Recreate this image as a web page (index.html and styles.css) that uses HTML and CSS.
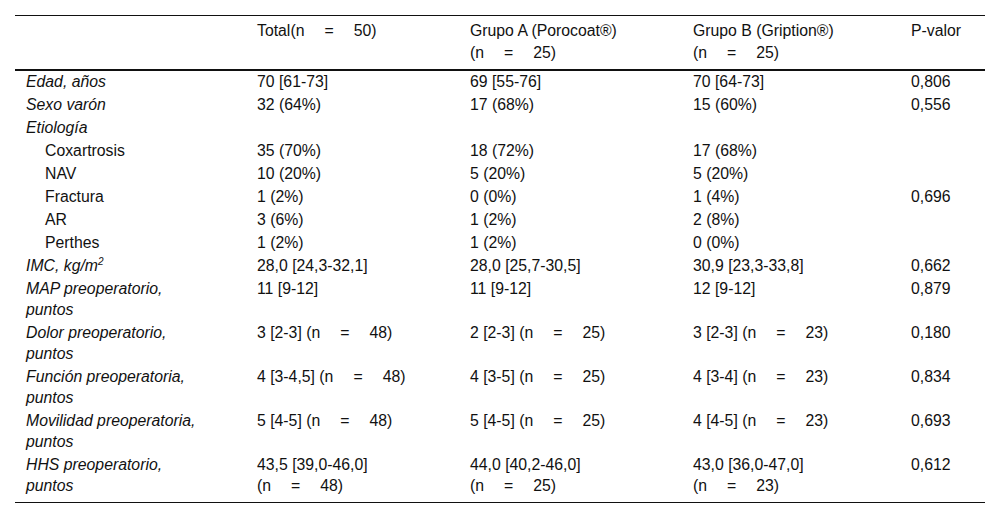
FILE: index.html
```html
<!DOCTYPE html>
<html lang="es">
<head>
<meta charset="utf-8">
<title>Tabla</title>
<link rel="stylesheet" href="styles.css">
</head>
<body>
<div class="page">
<table class="data">
  <colgroup>
    <col class="c1"><col class="c2"><col class="c3"><col class="c4"><col class="c5">
  </colgroup>
  <thead>
    <tr>
      <th></th>
      <th>Total<span class="n">(n<span class="eq">=</span>50)</span></th>
      <th>Grupo A (Porocoat®) <span class="n">(n<span class="eq">=</span>25)</span></th>
      <th>Grupo B (Gription®) <span class="n">(n<span class="eq">=</span>25)</span></th>
      <th>P-valor</th>
    </tr>
  </thead>
  <tbody>
    <tr><td class="lbl">Edad, años</td><td>70 [61-73]</td><td>69 [55-76]</td><td>70 [64-73]</td><td>0,806</td></tr>
    <tr><td class="lbl">Sexo varón</td><td>32 (64%)</td><td>17 (68%)</td><td>15 (60%)</td><td>0,556</td></tr>
    <tr><td class="lbl">Etiología</td><td></td><td></td><td></td><td></td></tr>
    <tr><td class="sub">Coxartrosis</td><td>35 (70%)</td><td>18 (72%)</td><td>17 (68%)</td><td></td></tr>
    <tr><td class="sub">NAV</td><td>10 (20%)</td><td>5 (20%)</td><td>5 (20%)</td><td></td></tr>
    <tr><td class="sub">Fractura</td><td>1 (2%)</td><td>0 (0%)</td><td>1 (4%)</td><td>0,696</td></tr>
    <tr><td class="sub">AR</td><td>3 (6%)</td><td>1 (2%)</td><td>2 (8%)</td><td></td></tr>
    <tr><td class="sub">Perthes</td><td>1 (2%)</td><td>1 (2%)</td><td>0 (0%)</td><td></td></tr>
    <tr><td class="lbl">IMC, kg/m<sup>2</sup></td><td>28,0 [24,3-32,1]</td><td>28,0 [25,7-30,5]</td><td>30,9 [23,3-33,8]</td><td>0,662</td></tr>
    <tr><td class="lbl">MAP preoperatorio, puntos</td><td>11 [9-12]</td><td>11 [9-12]</td><td>12 [9-12]</td><td>0,879</td></tr>
    <tr><td class="lbl">Dolor preoperatorio, puntos</td><td>3 [2-3] <span class="n">(n<span class="eq">=</span>48)</span></td><td>2 [2-3] <span class="n">(n<span class="eq">=</span>25)</span></td><td>3 [2-3] <span class="n">(n<span class="eq">=</span>23)</span></td><td>0,180</td></tr>
    <tr><td class="lbl">Función preoperatoria, puntos</td><td>4 [3-4,5] <span class="n">(n<span class="eq">=</span>48)</span></td><td>4 [3-5] <span class="n">(n<span class="eq">=</span>25)</span></td><td>4 [3-4] <span class="n">(n<span class="eq">=</span>23)</span></td><td>0,834</td></tr>
    <tr><td class="lbl">Movilidad preoperatoria, puntos</td><td>5 [4-5] <span class="n">(n<span class="eq">=</span>48)</span></td><td>5 [4-5] <span class="n">(n<span class="eq">=</span>25)</span></td><td>4 [4-5] <span class="n">(n<span class="eq">=</span>23)</span></td><td>0,693</td></tr>
    <tr class="last"><td class="lbl">HHS preoperatorio, puntos</td><td>43,5 [39,0-46,0] <span class="n">(n<span class="eq">=</span>48)</span></td><td>44,0 [40,2-46,0] <span class="n">(n<span class="eq">=</span>25)</span></td><td>43,0 [36,0-47,0] <span class="n">(n<span class="eq">=</span>23)</span></td><td>0,612</td></tr>
  </tbody>
</table>
</div>
</body>
</html>
```

FILE: styles.css
```css
html, body {
  margin: 0;
  padding: 0;
  background: #fff;
}
.page {
  padding: 15px 15px 0 15px;
}
.data {
  width: 970px;
  border-collapse: collapse;
  table-layout: fixed;
  font-family: "Liberation Sans", Arial, sans-serif;
  font-size: 15.8px;
  line-height: 21px;
  color: #111;
  border-top: 1px solid #111;
  border-bottom: 1px solid #111;
}
.c1 { width: 232px; }
.c2 { width: 213px; }
.c3 { width: 223px; }
.c4 { width: 218px; }
.c5 { width: 84px; }
.data th {
  font-weight: normal;
  text-align: left;
  vertical-align: top;
  padding: 4px 20px 5px 10px;
  line-height: 22px;
  border-bottom: 2px solid #111;
}
.data td {
  vertical-align: top;
  padding: 0 20px 2px 10px;
}
.data td.lbl,
.data td.sub {
  padding-right: 40px;
  padding-left: 11px;
}
.data td.lbl {
  font-style: italic;
}
.data td.sub {
  padding-left: 30px;
}
.data tr.last td {
  padding-bottom: 6px;
}
.n {
  white-space: nowrap;
}
.eq {
  padding: 0 20px;
}
sup {
  font-size: 10px;
  line-height: 0;
  vertical-align: 6px;
}
```
